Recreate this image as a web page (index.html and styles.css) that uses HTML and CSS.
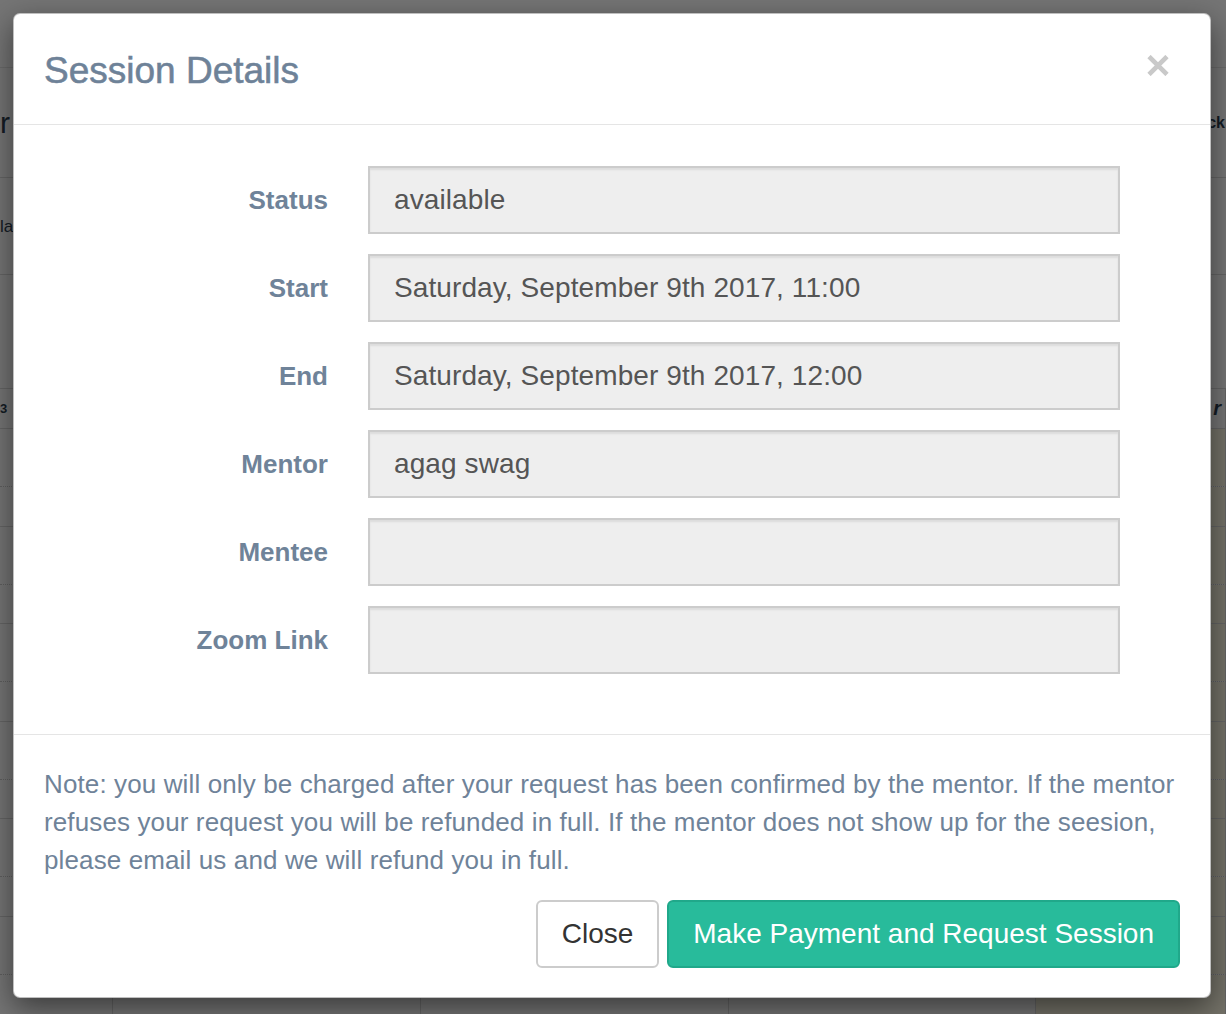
FILE: index.html
```html
<!DOCTYPE html>
<html lang="en">
<head>
<meta charset="utf-8">
<title>Session Details</title>
<link rel="stylesheet" href="styles.css">
</head>
<body>
<div class="page">
  <div class="topbar"></div>
  <div class="toolbar">
    <div class="frag-left big">r</div>
    <div class="frag-right big">ck</div>
  </div>
  <div class="subhead">
    <div class="frag-left mid">la</div>
  </div>
  <div class="gap"></div>
  <div class="cal">
    <div class="cal-row cal-head">
      <div class="cell"><div class="frag-left hd">3</div></div>
      <div class="cell"></div>
      <div class="cell"></div>
      <div class="cell"></div>
      <div class="cell hd-right"><span>r</span></div>
    </div>
    <div class="cal-row slot dotted"><div class="cell"></div><div class="cell"></div><div class="cell"></div><div class="cell"></div><div class="cell today"></div></div>
    <div class="cal-row slot2"><div class="cell"></div><div class="cell"></div><div class="cell"></div><div class="cell"></div><div class="cell today"></div></div>
    <div class="cal-row slot dotted"><div class="cell"></div><div class="cell"></div><div class="cell"></div><div class="cell"></div><div class="cell today"></div></div>
    <div class="cal-row slot2"><div class="cell"></div><div class="cell"></div><div class="cell"></div><div class="cell"></div><div class="cell today"></div></div>
    <div class="cal-row slot dotted"><div class="cell"></div><div class="cell"></div><div class="cell"></div><div class="cell"></div><div class="cell today"></div></div>
    <div class="cal-row slot2"><div class="cell"></div><div class="cell"></div><div class="cell"></div><div class="cell"></div><div class="cell today"></div></div>
    <div class="cal-row slot dotted"><div class="cell"></div><div class="cell"></div><div class="cell"></div><div class="cell"></div><div class="cell today"></div></div>
    <div class="cal-row slot2"><div class="cell"></div><div class="cell"></div><div class="cell"></div><div class="cell"></div><div class="cell today"></div></div>
    <div class="cal-row slot dotted"><div class="cell"></div><div class="cell"></div><div class="cell"></div><div class="cell"></div><div class="cell today"></div></div>
    <div class="cal-row slot2"><div class="cell"></div><div class="cell"></div><div class="cell"></div><div class="cell"></div><div class="cell today"></div></div>
    <div class="cal-row slot dotted"><div class="cell"></div><div class="cell"></div><div class="cell"></div><div class="cell"></div><div class="cell today"></div></div>
    <div class="cal-row slot2"><div class="cell"></div><div class="cell"></div><div class="cell"></div><div class="cell"></div><div class="cell today"></div></div>
  </div>
</div>

<div class="backdrop"></div>

<div class="modal" role="dialog">
  <div class="modal-header">
    <h4 class="modal-title">Session Details</h4>
    <button class="close" type="button" aria-label="Close">
      <svg width="22" height="21" viewBox="0 0 22 21"><path d="M2 1.5 L20 19.5 M20 1.5 L2 19.5" stroke="#c9c9c9" stroke-width="4.6" fill="none"/></svg>
    </button>
  </div>
  <div class="modal-body">
    <div class="form">
      <div class="lbl">Status</div><div class="field">available</div>
      <div class="lbl">Start</div><div class="field">Saturday, September 9th 2017, 11:00</div>
      <div class="lbl">End</div><div class="field">Saturday, September 9th 2017, 12:00</div>
      <div class="lbl">Mentor</div><div class="field">agag swag</div>
      <div class="lbl">Mentee</div><div class="field"></div>
      <div class="lbl">Zoom Link</div><div class="field"></div>
    </div>
  </div>
  <div class="modal-footer">
    <p class="note">Note: you will only be charged after your request has been confirmed by the mentor. If the mentor refuses your request you will be refunded in full. If the mentor does not show up for the seesion, please email us and we will refund you in full.</p>
    <div class="actions">
      <button class="btn btn-default" type="button">Close</button>
      <button class="btn btn-primary" type="button">Make Payment and Request Session</button>
    </div>
  </div>
</div>
</body>
</html>
```

FILE: styles.css
```css
* { box-sizing: border-box; }
html, body { margin: 0; padding: 0; }
body {
  width: 1226px;
  height: 1014px;
  overflow: hidden;
  font-family: "Liberation Sans", Arial, Helvetica, sans-serif;
  background: #ffffff;
  position: relative;
}

/* ---------- background page ---------- */
.page {
  height: 1014px;
  overflow: hidden;
  background: #ffffff;
  color: #2c3e50;
  display: flex;
  flex-direction: column;
}
.topbar { height: 68px; border-bottom: 1px solid #e6e6e6; flex: none; }
.toolbar {
  height: 110px;
  flex: none;
  display: flex;
  justify-content: space-between;
  align-items: center;
  border-bottom: 1px solid #dcdcdc;
}
.subhead {
  height: 97px;
  flex: none;
  display: flex;
  align-items: center;
  border-bottom: 1px solid #dcdcdc;
}
.gap { height: 113px; flex: none; }

.frag-left {
  white-space: nowrap;
  line-height: 1;
}
.frag-right {
  white-space: nowrap;
  line-height: 1;
  padding-right: 1px;
}
.big { font-size: 30px; }
.frag-right.big { font-size: 16px; font-weight: 700; }
.mid { font-size: 17px; }
.hd { font-size: 13px; font-weight: 700; }

.cal { flex: none; }
.cal-row {
  display: grid;
  grid-template-columns: 113px 308px 308px 307px 190px;
  border-bottom: 1px solid #dcdcdc;
}
.cal-head {
  height: 41px;
  border-top: 1px solid #dcdcdc;
  align-items: center;
}
.cal-head .cell { height: 100%; display: flex; align-items: center; }
.hd-right {
  justify-content: flex-end;
  padding-right: 4px;
  font-size: 20px;
  font-style: italic;
  font-weight: 700;
  white-space: nowrap;
}
.slot { height: 58px; }
.slot2 { height: 39.6px; }
.dotted { border-bottom: 1px dotted #d0d0d0; }
.cell { border-right: 1px solid #dcdcdc; }
.today { background: #fcf8e3; }

/* ---------- backdrop ---------- */
.backdrop {
  position: absolute;
  inset: 0;
  background: rgba(0, 0, 0, 0.54);
}

/* ---------- modal ---------- */
.modal {
  position: absolute;
  top: 13px;
  left: 13px;
  width: 1198px;
  background: #ffffff;
  border: 1px solid rgba(0, 0, 0, 0.25);
  border-radius: 7px;
  box-shadow: 0 10px 30px rgba(0, 0, 0, 0.5);
  color: #6f8399;
}
.modal-header {
  display: flex;
  justify-content: space-between;
  align-items: flex-start;
  padding: 31px 30px 28px 30px;
  border-bottom: 1px solid #e5e5e5;
}
.modal-title {
  margin: 0;
  font-size: 37px;
  line-height: 51px;
  font-weight: 500;
  color: #6e8298;
  -webkit-text-stroke: 0.55px #6e8298;
}
.close {
  margin: 10px 11px 0 0;
  padding: 0;
  border: 0;
  background: transparent;
  width: 22px;
  height: 21px;
  display: block;
}
.close svg { display: block; }

.modal-body {
  padding: 41px 30px 60px 30px;
  border-bottom: 1px solid #e5e5e5;
}
.form {
  display: grid;
  grid-template-columns: 284px 752px;
  column-gap: 40px;
  row-gap: 20px;
}
.lbl {
  align-self: center;
  text-align: right;
  font-size: 26px;
  font-weight: 700;
  color: #6f8399;
}
.field {
  height: 68px;
  padding: 0 24px;
  display: flex;
  align-items: center;
  background: #eeeeee;
  border: 2px solid #cccccc;
  box-shadow: inset 0 2px 2px rgba(0, 0, 0, 0.075);
  font-size: 28px;
  letter-spacing: 0.1px;
  color: #555555;
  white-space: nowrap;
}

.modal-footer {
  padding: 30px 30px 29px 30px;
}
.note {
  margin: 0;
  font-size: 26px;
  line-height: 38px;
  letter-spacing: 0.12px;
  color: #6f8399;
}
.actions {
  margin-top: 21px;
  display: flex;
  justify-content: flex-end;
  gap: 8px;
}
.btn {
  height: 68px;
  padding: 0 24px;
  border: 2px solid;
  border-radius: 6px;
  font-family: inherit;
  font-size: 28px;
  line-height: 1;
  cursor: pointer;
}
.btn-default {
  background: #ffffff;
  border-color: #cccccc;
  color: #333333;
}
.btn-primary {
  background: #28bb9b;
  border-color: #20a88a;
  color: #ffffff;
}
```
